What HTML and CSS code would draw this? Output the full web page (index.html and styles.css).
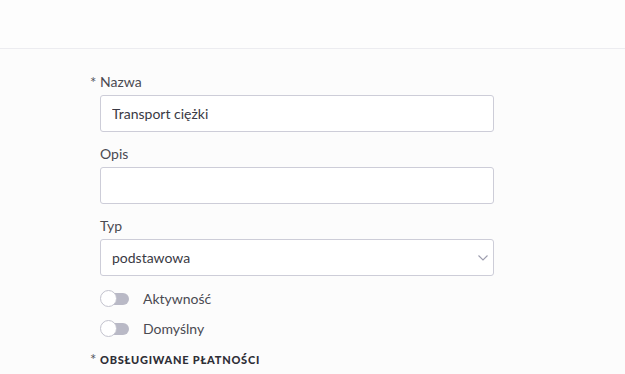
FILE: index.html
```html
<!DOCTYPE html>
<html lang="pl">
<head>
  <meta charset="UTF-8" />
  <title>Metoda dostawy</title>
  <link rel="stylesheet" href="styles.css">
</head>
<body>
  <header class="topbar"></header>

  <form class="form">
    <div class="field">
      <label class="label"><span class="req">*</span>Nazwa</label>
      <input class="input" type="text" value="Transport ciężki">
    </div>

    <div class="field">
      <label class="label">Opis</label>
      <input class="input" type="text">
    </div>

    <div class="field">
      <label class="label">Typ</label>
      <div class="select">
        <span>podstawowa</span>
        <svg width="10" height="6" viewBox="0 0 10 6"><path d="M0.5 0.5l4.5 4.5 4.5-4.5" fill="none" stroke="#9d9dae" stroke-width="1.1"/></svg>
      </div>
    </div>

    <div class="switches">
      <label class="switch"><span class="track"><span class="knob"></span></span>Aktywność</label>
      <label class="switch"><span class="track"><span class="knob"></span></span>Domyślny</label>
    </div>

    <h3 class="section"><span class="req">*</span>Obsługiwane płatności</h3>
  </form>
</body>
</html>
```

FILE: styles.css
```css
:root {
  --bg: #fcfcfc;
  --border: #cdcdd8;
  --text: #3a3a44;
  --label: #4a4a52;
}

body {
  margin: 0;
  background: var(--bg);
  font-family: 'Lato', sans-serif;
  color: var(--text);
}

.topbar {
  height: 48px;
  border-bottom: 1px solid #ececf0;
  background: #fdfdfd;
}

.form {
  width: 394px;
  margin: 0 0 0 100px;
  padding-top: 24px;
}

.field {
  display: flex;
  flex-direction: column;
  margin-bottom: 13px;
}

.label {
  font-size: 14px;
  color: var(--label);
  line-height: 18px;
  margin-bottom: 4px;
  position: relative;
}

.req {
  position: absolute;
  left: -10px;
  font-size: 15px;
  font-weight: 400;
  letter-spacing: 0;
  color: #55555e;
}

.input,
.select {
  box-sizing: border-box;
  height: 37px;
  border: 1px solid var(--border);
  border-radius: 3px;
  background: #fff;
  font-family: inherit;
  font-size: 14px;
  color: var(--text);
  padding: 0 11px;
  outline: none;
}

.select {
  display: flex;
  align-items: center;
  justify-content: space-between;
  padding-right: 5px;
}

.switches {
  display: flex;
  flex-direction: column;
  gap: 11px;
  margin-top: 10px;
}

.switch {
  display: flex;
  align-items: center;
  gap: 14px;
  font-size: 14px;
  color: var(--label);
  line-height: 19px;
}

.track {
  position: relative;
  width: 28px;
  height: 12px;
  margin-left: 1px;
  border-radius: 6px;
  background: #b9b9c6;
}

.knob {
  position: absolute;
  left: -1px;
  top: -3px;
  width: 17px;
  height: 17px;
  box-sizing: border-box;
  border-radius: 50%;
  background: #fff;
  border: 1px solid #c3c3ce;
}

.section {
  position: relative;
  margin: 15px 0 0;
  font-size: 11px;
  line-height: 14px;
  font-weight: 900;
  letter-spacing: 0.75px;
  text-transform: uppercase;
  color: #2e2e36;
}

.section .req {
  top: -1px;
}
```
